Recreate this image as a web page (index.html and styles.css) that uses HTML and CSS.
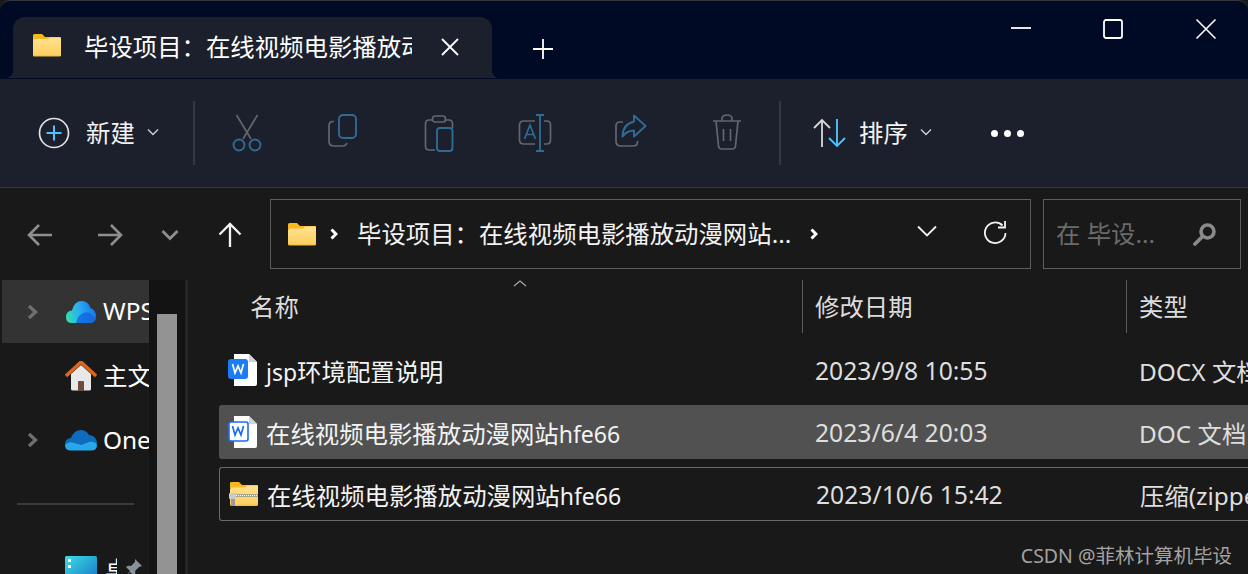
FILE: index.html
```html
<!DOCTYPE html>
<html lang="zh-CN">
<head>
<meta charset="utf-8">
<title>文件资源管理器</title>
<link rel="stylesheet" href="styles.css">
</head>
<body>
<div class="window">
  <header class="titlebar">
    <div class="tab">
      <svg class="tab-folder" width="30" height="26" viewBox="0 0 30 26"><path d="M1 3.500Q1 2 2.500 2H10l3 3h15.500Q29 5 29 6.500V8H1z" fill="#f9b81c"/><path d="M1 8.500Q1 7 3 7h13l2-1.500h10.500Q29 5.500 29 7v16.500q0 1-1 1H2q-1 0-1-1z" fill="url(#fg)"/><defs><linearGradient id="fg" x1="0" y1="0" x2="0" y2="1"><stop offset="0" stop-color="#ffe28f"/><stop offset=".9" stop-color="#fdd063"/><stop offset="1" stop-color="#f5b92e"/></linearGradient></defs></svg>
      <span class="tab-title">毕设项目：在线视频电影播放动漫网站hfe66</span>
      <svg class="tab-close" width="20" height="20" viewBox="0 0 20 20"><path d="M2 2l16 16M18 2L2 18" stroke="#fff" stroke-width="1.800" fill="none"/></svg>
    </div>
    <svg class="new-tab" width="22" height="22" viewBox="0 0 22 22"><path d="M11 1v20M1 11h20" stroke="#fff" stroke-width="1.800"/></svg>
    <div class="win-controls">
      <svg class="win-btn" width="22" height="22" viewBox="0 0 22 22"><path d="M1 10h20" stroke="#fff" stroke-width="1.800"/></svg>
      <svg class="win-btn win-max" width="22" height="22" viewBox="0 0 22 22"><rect x="2" y="2" width="18" height="18" rx="2" stroke="#fff" stroke-width="1.800" fill="none"/></svg>
      <svg class="win-btn" width="22" height="22" viewBox="0 0 22 22"><path d="M1.500 1.500l19 19M20.500 1.500l-19 19" stroke="#fff" stroke-width="1.600" fill="none"/></svg>
    </div>
  </header>

  <section class="toolbar">
    <div class="tool-text tool-new">
      <svg width="32" height="36" viewBox="0 0 32 36"><circle cx="16" cy="18" r="14.500" stroke="#e2e2e2" stroke-width="1.700" fill="none"/><path d="M16 10.500v15M8.500 18h15" stroke="#4cc2ff" stroke-width="2"/></svg>
      <span class="tool-label">新建</span>
      <svg class="caret" width="12" height="8" viewBox="0 0 12 8"><path d="M1 1.500l5 5 5-5" stroke="#cfcfcf" stroke-width="1.400" fill="none"/></svg>
    </div>
    <span class="tool-sep"></span>
    <div class="tool-group">
      <div class="tool"><svg width="30" height="38" viewBox="0 0 30 38"><path d="M4.500 1l14.500 24M25.500 1L11 25" stroke="#62666d" stroke-width="1.700" fill="none"/><circle cx="7" cy="31" r="5.500" stroke="#2f6b93" stroke-width="1.900" fill="none"/><circle cx="23" cy="31" r="5.500" stroke="#2f6b93" stroke-width="1.900" fill="none"/></svg></div>
      <div class="tool"><svg width="30" height="34" viewBox="0 0 30 34"><path d="M6 7.500H5Q1 7.500 1 12v15q0 5 5 5h8q4 0 5-3" stroke="#62666d" stroke-width="1.700" fill="none"/><rect x="11" y="1" width="17" height="23" rx="4" stroke="#2f6b93" stroke-width="1.900" fill="none"/></svg></div>
      <div class="tool"><svg width="30" height="38" viewBox="0 0 30 38"><path d="M8 6H5Q1.500 6 1.500 10v22q0 4 3.500 4h6M22 6h3q3.500 0 3.500 4v4" stroke="#62666d" stroke-width="1.700" fill="none"/><rect x="8.500" y="2" width="13" height="6" rx="2.500" stroke="#62666d" stroke-width="1.700" fill="none"/><rect x="13" y="14" width="15.500" height="23" rx="3" stroke="#2f6b93" stroke-width="1.900" fill="none"/></svg></div>
      <div class="tool"><svg width="34" height="38" viewBox="0 0 34 38"><path d="M17 7H6Q1.500 7 1.500 11v15q0 4 4.500 4h11M26 7h2.500q4 0 4 4v15q0 4-4 4H26" stroke="#62666d" stroke-width="1.700" fill="none"/><path d="M22 1v36M18 1h8M18 37h8" stroke="#2f6b93" stroke-width="1.900" fill="none"/><path d="M6.500 25L12 11l5.500 14M8.500 20.500h7" stroke="#2f6b93" stroke-width="1.700" fill="none"/></svg></div>
      <div class="tool"><svg width="32" height="34" viewBox="0 0 32 34"><path d="M8 8H5Q1 8 1 12v15q0 5 5 5h12q4.500 0 4.500-4v-1" stroke="#62666d" stroke-width="1.700" fill="none"/><path d="M19 1.500L30.500 12 19 22.500v-6q-7 0-11.500 6 0-12 11.500-15z" stroke="#2f6b93" stroke-width="1.900" fill="none" stroke-linejoin="round"/></svg></div>
      <div class="tool"><svg width="30" height="36" viewBox="0 0 30 36"><path d="M1 7h28M10 7V5Q10 1 15 1t5 4v2M4 7l2.500 25q.3 3 3.500 3h10q3.200 0 3.500-3L26 7M11.500 15v12M18.500 15v12" stroke="#62666d" stroke-width="1.700" fill="none"/></svg></div>
    </div>
    <span class="tool-sep tool-sep-b"></span>
    <div class="tool-text tool-sort">
      <svg width="34" height="30" viewBox="0 0 34 30"><path d="M9 29V2M1 10l8-8 8 8" stroke="#d8d8d8" stroke-width="1.800" fill="none"/><path d="M24 1v27M16 20l8 8 8-8" stroke="#4cc2ff" stroke-width="1.900" fill="none"/></svg>
      <span class="tool-label">排序</span>
      <svg class="caret" width="12" height="8" viewBox="0 0 12 8"><path d="M1 1.500l5 5 5-5" stroke="#cfcfcf" stroke-width="1.400" fill="none"/></svg>
    </div>
    <div class="dots"><span></span><span></span><span></span></div>
  </section>

  <nav class="navbar">
    <svg class="nav-btn" width="26" height="24" viewBox="0 0 26 24"><path d="M25 12H2M12 2L2 12l10 10" stroke="#8f8f8f" stroke-width="2.600" fill="none"/></svg>
    <svg class="nav-btn nav-fwd" width="26" height="24" viewBox="0 0 26 24"><path d="M1 12h23M14 2l10 10-10 10" stroke="#8f8f8f" stroke-width="2.600" fill="none"/></svg>
    <svg class="nav-btn nav-down" width="18" height="12" viewBox="0 0 18 12"><path d="M1.500 2L9 9.500 16.500 2" stroke="#8f8f8f" stroke-width="2.800" fill="none"/></svg>
    <svg class="nav-btn nav-up" width="24" height="26" viewBox="0 0 24 26"><path d="M12 25V2M1.500 12.500L12 2l10.500 10.500" stroke="#f2f2f2" stroke-width="2.300" fill="none"/></svg>
    <div class="address">
      <svg width="30" height="24" viewBox="0 0 30 24"><path d="M1 2.500Q1 1 2.500 1H10l3 3h15.500Q29 4 29 5.500V7H1z" fill="#f9b81c"/><path d="M1 8Q1 6.500 3 6.500h13L18 4.500h10.500Q29 4.500 29 6v16q0 1.500-1.500 1.500h-25Q1 23.500 1 22z" fill="url(#fg)"/></svg>
      <svg class="crumb-sep" width="8" height="12" viewBox="0 0 8 12"><path d="M1.500 1.500L6 6l-4.500 4.500" stroke="#fff" stroke-width="3" fill="none"/></svg>
      <span class="crumb">毕设项目：在线视频电影播放动漫网站...</span>
      <svg class="crumb-sep crumb-sep-end" width="8" height="12" viewBox="0 0 8 12"><path d="M1.500 1.500L6 6l-4.500 4.500" stroke="#fff" stroke-width="3" fill="none"/></svg>
      <svg class="addr-down" width="20" height="12" viewBox="0 0 20 12"><path d="M1 1.500l9 9 9-9" stroke="#f2f2f2" stroke-width="1.800" fill="none"/></svg>
      <svg class="addr-refresh" width="24" height="24" viewBox="0 0 24 24"><path d="M19.500 5.500A10.300 10.300 0 1 0 22.500 13" stroke="#f2f2f2" stroke-width="1.800" fill="none"/><path d="M22 1v6.500h-7" stroke="#f2f2f2" stroke-width="1.800" fill="none"/></svg>
    </div>
    <div class="search">
      <span class="search-text">在 毕设...</span>
      <svg width="24" height="24" viewBox="0 0 24 24"><circle cx="14.500" cy="9.500" r="6.500" stroke="#8a8a8a" stroke-width="3.600" fill="none"/><path d="M9.500 14.500L2 22" stroke="#8a8a8a" stroke-width="3.800" stroke-linecap="round"/></svg>
    </div>
  </nav>

  <main class="body">
    <aside class="sidebar">
      <div class="side-list">
        <div class="side-item side-item-active">
          <svg class="side-chev" width="12" height="16" viewBox="0 0 12 16"><path d="M2 2l6.500 6L2 14" stroke="#6e6e6e" stroke-width="3.400" fill="none"/></svg>
          <svg class="side-icon" width="32" height="24" viewBox="0 0 32 24"><defs><linearGradient id="wg" x1="0" y1=".6" x2="1" y2=".4"><stop offset="0" stop-color="#2fe0b0"/><stop offset=".5" stop-color="#2aa9f5"/><stop offset="1" stop-color="#1573e8"/></linearGradient></defs><path d="M7 23Q1 23 1 17q0-6 6-6.500Q9 1 17 1q6 0 8.500 7Q31 10 31 16q0 7-7 7z" fill="url(#wg)"/><path d="M11 23q2-8 7-10 6-2 9 2 3 3 4 2 0 6-7 6z" fill="#1264de" opacity=".8"/></svg>
          <span class="side-label">WPS网盘</span>
        </div>
        <div class="side-item">
          <span class="side-chev-space"></span>
          <svg class="side-icon" width="32" height="30" viewBox="0 0 32 30"><path d="M6 13L16 4l10 9v15q0 1.500-2 1.500H8q-2 0-2-1.500z" fill="#e8e8e8"/><path d="M13 30v-9q0-1 1-1h4q1 0 1 1v9z" fill="#6d4c41"/><path d="M1 15L16 1l15 14" stroke="#e0651e" stroke-width="3.400" fill="none" stroke-linejoin="round"/></svg>
          <span class="side-label">主文件夹</span>
        </div>
        <div class="side-item">
          <svg class="side-chev" width="12" height="16" viewBox="0 0 12 16"><path d="M2 2l6.500 6L2 14" stroke="#6e6e6e" stroke-width="3.400" fill="none"/></svg>
          <svg class="side-icon" width="32" height="22" viewBox="0 0 32 22"><path d="M6 21Q0 20 0 15q0-5 6-6Q9 1 16 1q5 0 8 5 6 0 8 7 0 8-6 8z" fill="#0f6cbd"/><path d="M5 21.500Q0 21 0 16q4-4 9-2l7 2 8-3q6-1 8 3 0 5.500-6 5.500z" fill="#28a8ea"/></svg>
          <span class="side-label">OneDrive</span>
        </div>
        <hr class="side-rule">
        <div class="side-item side-item-desktop">
          <span class="side-chev-space"></span>
          <svg class="side-icon" width="32" height="28" viewBox="0 0 32 28"><defs><linearGradient id="dg" x1="0" y1="0" x2="1" y2="1"><stop offset="0" stop-color="#3fdbe6"/><stop offset="1" stop-color="#1272c4"/></linearGradient></defs><rect width="32" height="28" rx="1.500" fill="url(#dg)"/><rect x="3" y="3" width="3" height="3" fill="#fff"/><rect x="3" y="9" width="3" height="3" fill="#fff"/></svg>
          <span class="side-label side-label-desk">桌</span>
          <svg class="pin" width="20" height="20" viewBox="0 0 20 20"><path d="M12 1l7 7-3 1-4 4q1 3-1 5L7 14l-5 5 5-6-4-4q2-2 5-1l4-4z" fill="#8a929b"/></svg>
        </div>
      </div>
      <div class="scroll-track"><div class="scroll-thumb"></div></div>
    </aside>

    <section class="files">
      <div class="file-head">
        <div class="col-name">名称<svg class="sort-mark" width="14" height="7" viewBox="0 0 14 7"><path d="M1 6l6-5 6 5" stroke="#a8a8a8" stroke-width="1.200" fill="none"/></svg></div>
        <div class="col-date">修改日期</div>
        <div class="col-type">类型</div>
      </div>
      <div class="file-rows">
        <div class="file-row">
          <div class="file-name">
            <svg width="30" height="32" viewBox="0 0 30 32"><path d="M6 0h15l8 8v22q0 2-2 2H6z" fill="#fff"/><path d="M21 0l8 8h-8z" fill="#c9d3e0"/><rect x="0" y="5" width="20" height="20" rx="3" fill="#1b7cf5"/><path d="M4.500 10l2.500 9 3-7 3 7 2.500-9" stroke="#fff" stroke-width="1.700" fill="none"/></svg>
            <span><span class="latin">jsp</span>环境配置说明</span>
          </div>
          <div class="file-date">2023/9/8 10:55</div>
          <div class="file-type">DOCX 文档</div>
        </div>
        <div class="file-row file-row-selected">
          <div class="file-name">
            <svg width="30" height="32" viewBox="0 0 30 32"><path d="M6 0h15l8 8v22q0 2-2 2H6z" fill="#fff"/><path d="M21 0l8 8h-8z" fill="#c9d3e0"/><rect x="1" y="6" width="19" height="19" rx="2" fill="#fff" stroke="#1b6cf0" stroke-width="1.600"/><path d="M4.500 10l2.500 9 3-7 3 7 2.500-9" stroke="#1b6cf0" stroke-width="1.700" fill="none"/></svg>
            <span>在线视频电影播放动漫网站<span class="latin">hfe66</span></span>
          </div>
          <div class="file-date">2023/6/4 20:03</div>
          <div class="file-type">DOC 文档</div>
        </div>
        <div class="file-row file-row-focus">
          <div class="file-name">
            <svg width="30" height="26" viewBox="0 0 30 26"><path d="M1 2Q1 1 2.500 1H10l3 3h15.500Q29 4 29 5.500V7H1z" fill="#f9b81c"/><path d="M1 8.500Q1 6.500 3 6.500h13L18 4.500h10.500Q29 4.500 29 6v17.500q0 1.500-1.500 1.500h-25Q1 25 1 23.500z" fill="url(#fg)"/><rect x="1" y="13" width="28" height="3" fill="#a9a38b"/><path d="M7 14.500h22" stroke="#fff" stroke-width="1.200" stroke-dasharray="1 1"/><rect x="0" y="12" width="7" height="6" rx="1" fill="#c9c9c9"/><rect x="2" y="18" width="4" height="7" fill="#9b9b9b"/></svg>
            <span>在线视频电影播放动漫网站<span class="latin">hfe66</span></span>
          </div>
          <div class="file-date">2023/10/6 15:42</div>
          <div class="file-type">压缩(zipped)文件夹</div>
        </div>
      </div>
    </section>
  </main>
  <div class="watermark">CSDN @菲林计算机毕设</div>
</div>
</body>
</html>
```

FILE: styles.css
```css
* { box-sizing: border-box; }
html, body { margin: 0; height: 100%; overflow: hidden; background: #191919; }
body { font-family: "Noto Sans", "Noto Sans CJK SC", sans-serif; color: #fff; }
svg { display: block; flex: none; }

.window { position: relative; width: 1248px; height: 574px; overflow: hidden; background: #191919; }

.titlebar { display: flex; align-items: flex-start; height: 79px; background: #000a24; border-top: 1px solid #34373d; border-radius: 10px 10px 0 0; padding-left: 13px; }
.tab { position: relative; display: flex; align-items: center; width: 479px; height: 61px; margin-top: 16px; padding-left: 19px; background: #1b202c; border-radius: 12px 12px 0 0; }
.tab::before, .tab::after { content: ""; position: absolute; bottom: 0; width: 8px; height: 8px; }
.tab::before { left: -8px; background: radial-gradient(circle at 0 0, #000a24 8px, #1b202c 8.500px); }
.tab::after { right: -8px; background: radial-gradient(circle at 100% 0, #000a24 8px, #1b202c 8.500px); }
.tab-folder { margin-top: -5px; }
.tab-title { width: 328px; margin-left: 22px; overflow: hidden; white-space: nowrap; font-size: 24.4px; line-height: 36px; margin-top: -1px; }
.tab-close { margin-left: 28px; margin-top: -2px; }
.new-tab { margin: 37px 0 0 40px; }
.win-controls { display: flex; margin-left: auto; gap: 70px; padding: 17px 31px 0 0; }
.win-max { margin-right: 1px; }

.toolbar { display: flex; align-items: center; height: 109px; padding-left: 38px; background: #1b202c; border-bottom: 1px solid #35373b; }
.tool-text { display: flex; align-items: center; }
.tool-new { width: 123px; }
.tool-new .tool-label { margin-left: 16px; }
.tool-label { font-size: 24.4px; line-height: 34px; color: #f3f3f3; }
.caret { margin-left: 12px; margin-top: -2px; }
.tool-sep { width: 2px; height: 64px; margin: 0 4px 0 32px; background: #33373f; }
.tool-group { display: flex; }
.tool { display: flex; justify-content: center; width: 96px; }
.tool-sep-b { margin: 0 32px 0 4px; }
.tool-sort .tool-label { margin-left: 12px; }
.tool-sort { width: 178px; }
.dots { display: flex; gap: 6px; }
.dots span { width: 7px; height: 7px; border-radius: 50%; background: #fff; }

.navbar { display: flex; align-items: center; height: 92px; padding: 0 0 0 27px; background: #191919; }
.nav-btn { margin-top: 2px; }
.nav-fwd { margin-left: 44px; }
.nav-down { margin-left: 38px; }
.nav-up { margin-left: 39px; }
.address { display: flex; align-items: center; width: 761px; height: 70px; margin-left: 28px; padding: 0 23px 0 16px; border: 1px solid #5d5d5d; }
.crumb-sep { margin-left: 13px; }
.crumb { margin-left: 19px; font-size: 24.4px; line-height: 36px; color: #f3f3f3; white-space: nowrap; }
.crumb-sep-end { margin-left: 19px; }
.addr-down { margin-left: auto; margin-top: -7px; }
.addr-refresh { margin-left: 46px; margin-top: -5px; }
.search { display: flex; align-items: center; justify-content: space-between; width: 198px; height: 70px; margin-left: 12px; padding: 0 23px 0 12px; border: 1px solid #5d5d5d; }
.search-text { font-size: 24.4px; line-height: 36px; color: #6b6b6b; white-space: nowrap; }

.body { display: flex; height: 294px; }
.sidebar { display: flex; width: 188px; flex: none; border-right: 3px solid #262626; }
.side-list { width: 149px; flex: none; overflow: hidden; }
.side-item { display: flex; align-items: center; height: 64px; padding-left: 27px; white-space: nowrap; }
.side-item-active { height: 63px; margin: 0 0 1px 2px; padding-left: 25px; background: #333; }
.side-chev-space { width: 12px; flex: none; }
.side-icon { margin-left: 26px; }
.side-label { margin-left: 6px; font-size: 24.4px; line-height: 34px; margin-top: -1px; }
.side-rule { height: 2px; margin: 31px 15px 51px 17px; border: 0; background: #3a3a3a; }
.side-item-desktop { height: 40px; align-items: flex-start; }
.side-label-desk { width: 12px; overflow: hidden; margin: -2px 0 0 8px; line-height: 32px; }
.pin { margin: 2px 0 0 6px; }
.scroll-track { flex: 1; padding: 34px 8px 0; background: #131313; }
.scroll-thumb { height: 260px; background: #939393; }

.files { flex: 1; min-width: 0; padding-left: 31px; }
.file-head { display: grid; grid-template-columns: 583px 324px 1fr; height: 51px; }
.file-head > div { font-size: 24.4px; line-height: 53px; color: #dcdcdc; }
.col-name { position: relative; padding-left: 31px; }
.sort-mark { position: absolute; left: 294px; top: 0; }
.col-date, .col-type { border-left: 1px solid #5d5d5d; padding-left: 12px; white-space: nowrap; }
.file-rows { display: flex; flex-direction: column; gap: 8px; margin-top: 12px; }
.file-row { display: grid; grid-template-columns: 596px 324px 1fr; align-items: center; height: 54px; white-space: nowrap; font-size: 24.4px; }
.file-row-selected { background: #515151; border-radius: 3px 0 0 3px; }
.file-row-focus { border: 1px solid #6b6b6b; border-right: 0; border-radius: 3px 0 0 3px; }
.file-name { display: flex; align-items: center; gap: 8px; padding-left: 9px; color: #f3f3f3; }
.latin { font-size: 23px; }
.file-date { font-size: 24.7px; color: #dedede; }
.file-type { color: #dedede; }

.watermark { position: absolute; right: 16px; bottom: 6px; font-size: 19.5px; line-height: 24px; color: #a3a3a3; white-space: nowrap; }
```
